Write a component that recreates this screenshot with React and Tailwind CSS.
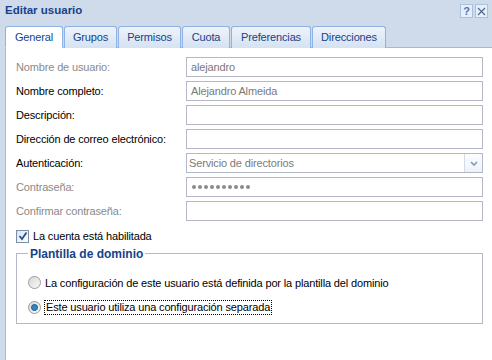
const tabs = [
  { label: "General", w: "w-[58px]", active: true },
  { label: "Grupos", w: "w-[53px]" },
  { label: "Permisos", w: "w-[63px]" },
  { label: "Cuota", w: "w-[48px]" },
  { label: "Preferencias", w: "w-[80px]" },
  { label: "Direcciones", w: "w-[74px]" },
];

function Field({ label, disabled, value, children }) {
  return (
    <div className="flex h-[20px] items-center">
      <div className={`w-[170px] ${disabled ? "text-[#8a8a8a]" : "text-black"}`}>{label}</div>
      {children || (
        <div className="flex h-[20px] w-[297px] items-center border border-[#b5b8c8] bg-white px-[4px] text-[#7a7a7a]">
          {value}
        </div>
      )}
    </div>
  );
}

function Radio({ checked }) {
  return (
    <div className="flex h-[13px] w-[13px] items-center justify-center rounded-full border border-[#9a9a9a] bg-gradient-to-br from-[#d8d8d8] to-[#fafafa]">
      {checked && <div className="h-[7px] w-[7px] rounded-full border border-[#1a5a8c] bg-[#2f86c8]" />}
    </div>
  );
}

export default function App() {
  return (
    <div className="flex h-[360px] w-[492px] flex-col overflow-hidden bg-[#cfdbea] font-['Liberation_Sans',sans-serif] text-[11px] tracking-[-0.15px]">
      <div className="flex h-[22px] items-center justify-between pl-[5px] pr-[4px]">
        <span className="text-[11.5px] font-bold tracking-normal text-[#15428b]">Editar usuario</span>
        <div className="flex gap-[2px]">
          <div className="flex h-[14px] w-[13px] items-center justify-center border border-[#a9c0de] bg-[#e8eff8] text-[11px] font-bold leading-none text-[#4a76b4]">?</div>
          <div className="flex h-[14px] w-[13px] items-center justify-center border border-[#a9c0de] bg-[#e8eff8]">
            <svg width="9" height="9" viewBox="0 0 9 9">
              <path d="M1 1L8 8M8 1L1 8" stroke="#4a6894" strokeWidth="1.2" />
            </svg>
          </div>
        </div>
      </div>
      <div className="mt-[4px] flex h-[22px] gap-[1px] pl-[5px]">
        {tabs.map((t) => (
          <div
            key={t.label}
            className={`${t.w} relative z-10 flex items-center justify-center rounded-t-[3px] border border-[#8db2e3] text-[#15428b] ${
              t.active ? "border-b-white bg-white" : "border-b-0 bg-gradient-to-b from-[#eef3fa] to-[#d5e2f2]"
            }`}
          >
            {t.label}
          </div>
        ))}
      </div>
      <div className="-mt-px ml-[5px] flex-1 border-l border-t border-[#99bbe8] bg-white pl-[10px] pt-[9px]">
        <div className="flex flex-col gap-[4px]">
          <Field label="Nombre de usuario:" disabled value="alejandro" />
          <Field label="Nombre completo:" value="Alejandro Almeida" />
          <Field label="Descripción:" value="" />
          <Field label="Dirección de correo electrónico:" value="" />
          <Field label="Autenticación:">
            <div className="flex h-[20px] w-[297px] border border-[#b5b8c8] bg-white">
              <div className="flex flex-1 items-center px-[2px] text-[#7a7a7a]">Servicio de directorios</div>
              <div className="flex w-[18px] items-center justify-center border-l border-[#d4dbe6] bg-gradient-to-b from-[#fbfcfe] to-[#eef2f8]">
                <svg width="8" height="5" viewBox="0 0 8 5">
                  <path d="M1 1L4 4L7 1" stroke="#7a98c2" strokeWidth="1.6" fill="none" />
                </svg>
              </div>
            </div>
          </Field>
          <Field label="Contraseña:" disabled>
            <div className="flex h-[20px] w-[297px] items-center gap-[2px] border border-[#b5b8c8] bg-white px-[5px]">
              {Array.from({ length: 10 }).map((_, i) => (
                <div key={i} className="h-[4px] w-[4px] rounded-full bg-[#8a8a8a]" />
              ))}
            </div>
          </Field>
          <Field label="Confirmar contraseña:" disabled value="" />
        </div>
        <div className="mt-[7px] flex items-center gap-[4px]">
          <div className="flex h-[13px] w-[13px] items-center justify-center border border-[#7b8ea8] bg-gradient-to-br from-[#dde4ee] to-white">
            <svg width="10" height="10" viewBox="0 0 10 10">
              <path d="M1.5 5L4 8L8.5 1.5" stroke="#2a4f8a" strokeWidth="1.8" fill="none" />
            </svg>
          </div>
          <span>La cuenta está habilitada</span>
        </div>
        <fieldset className="mt-0 h-[79px] w-[467px] border border-[#b5b8c8] pl-[11px]">
          <legend className="px-[2px] text-[12px] font-bold tracking-normal text-[#15428b]">Plantilla de dominio</legend>
          <div className="mt-[12px] flex items-center gap-[4px]">
            <Radio />
            <span>La configuración de este usuario está definida por la plantilla del dominio</span>
          </div>
          <div className="mt-[9px] flex items-center gap-[3px]">
            <Radio checked />
            <span className="border border-dotted border-black px-px leading-[13px]">Este usuario utiliza una configuración separada</span>
          </div>
        </fieldset>
      </div>
    </div>
  );
}
